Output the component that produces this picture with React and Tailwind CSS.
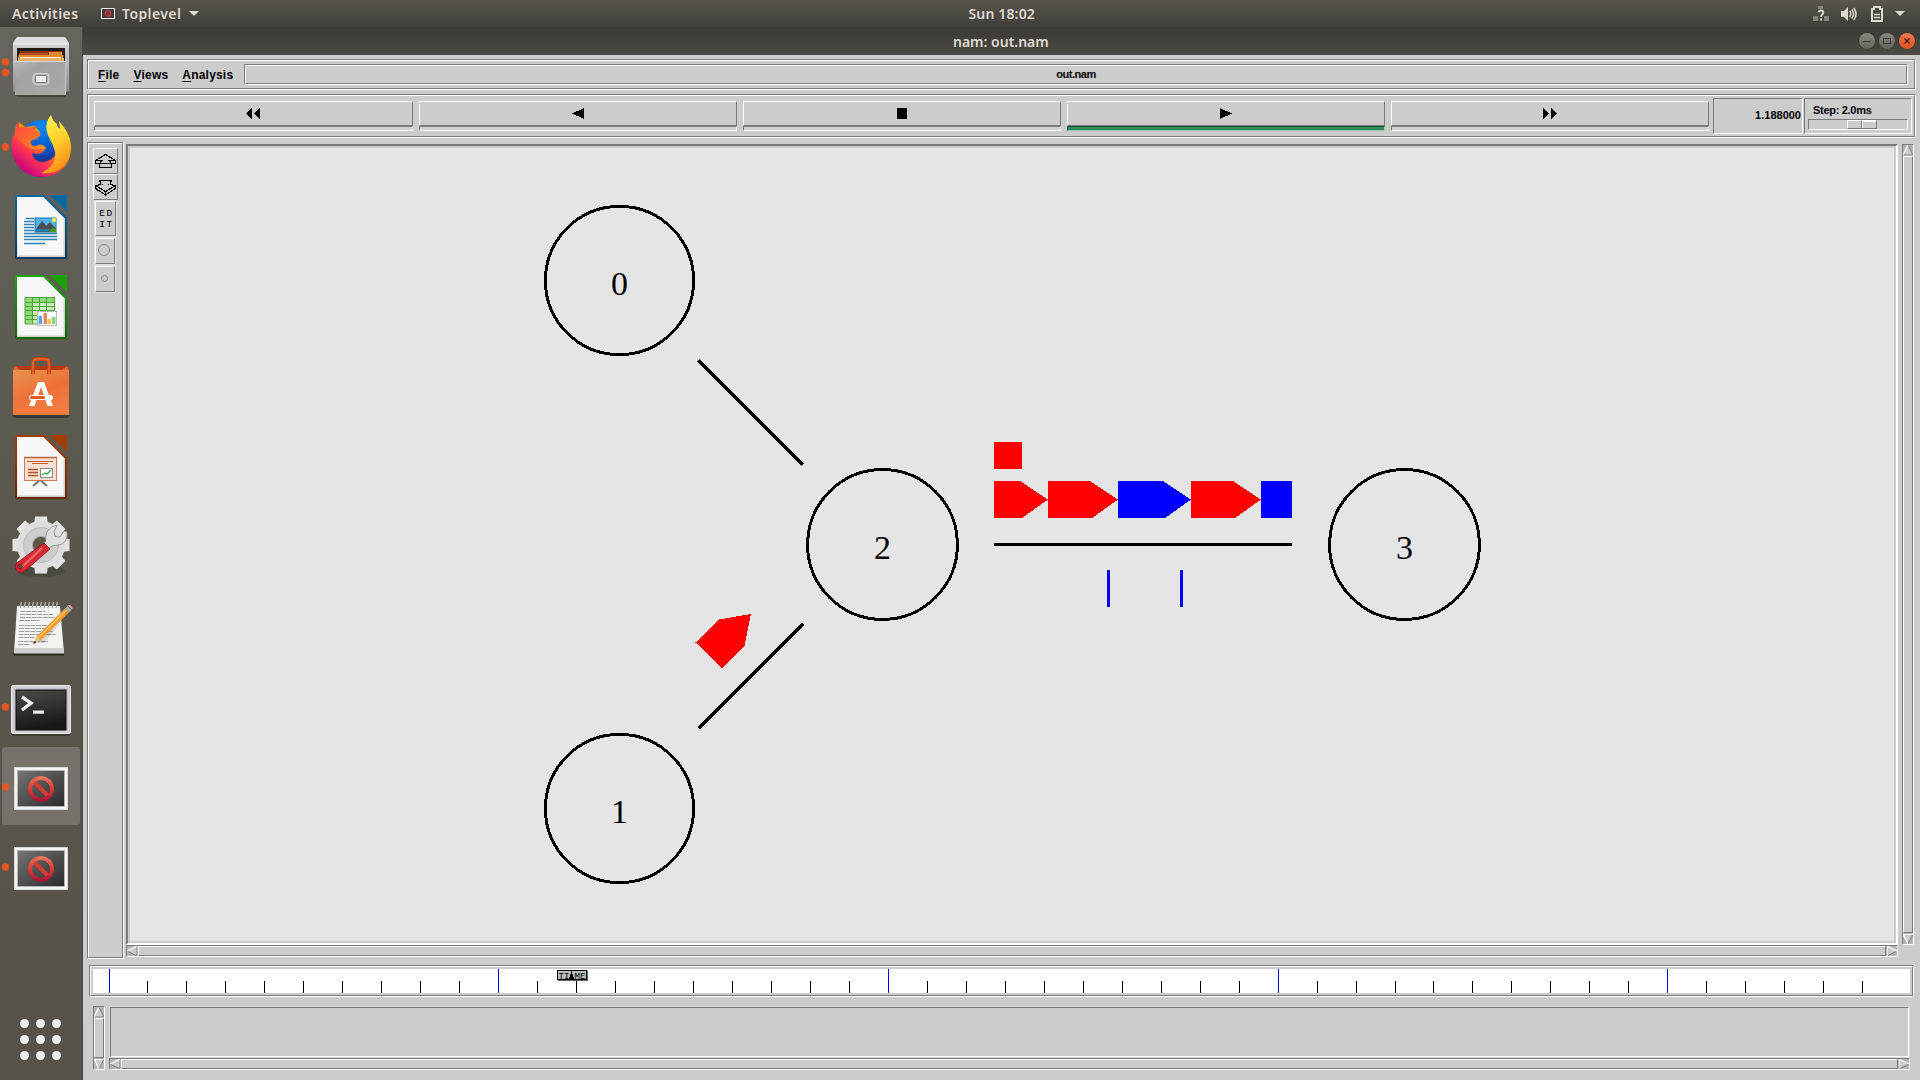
import React from "react";

const SUNKEN = "border border-t-[#7a7a7a] border-l-[#7a7a7a] border-b-white border-r-white";
const RAISED = "border border-t-white border-l-white border-b-[#7a7a7a] border-r-[#7a7a7a]";

function Groove({ className = "", inner = "", children }) {
  return (
    <div className={`${SUNKEN} ${className}`}>
      <div className={`${RAISED} h-full w-full ${inner}`}>{children}</div>
    </div>
  );
}

/* ---------- Dock icons ---------- */

function FilesIcon() {
  return (
    <>
      <defs>
        <linearGradient id="cab" x1="0" y1="0" x2="0" y2="1">
          <stop offset="0" stopColor="#d2d2d2" />
          <stop offset="1" stopColor="#8c8c8c" />
        </linearGradient>
        <linearGradient id="drawer" x1="0" y1="0" x2="1" y2="1">
          <stop offset="0" stopColor="#b9b9b9" />
          <stop offset="0.3" stopColor="#a2a2a2" />
          <stop offset="1" stopColor="#a9a9a9" />
        </linearGradient>
      </defs>
      <path d="M14 65h54l-3 5H17z" fill="#000" opacity=".3" />
      <path d="M13 17h56v47l-3 1H15l-2-1z" fill="url(#cab)" />
      <path d="M17 10h48l4 6v1H13v-1z" fill="#dedede" />
      <path d="M13.5 17h55" stroke="#f4f4f4" />
      <rect x="17" y="21" width="48" height="13" fill="#1f1c1a" />
      <path d="M20 24h42v10H19z" fill="#8f3410" />
      <path d="M49 25h13v3H49zM18.500 28h45v6h-46z" fill="#e08a2e" />
      <path d="M19 26h29v2H19z" fill="#b4521b" />
      <path d="M18 31h46v3H18z" fill="#e9b26c" />
      <path d="M20 30.500h41" stroke="#fff3e0" />
      <path d="M15 34h51v34H15z" fill="url(#drawer)" />
      <path d="M26 34.500h39.500v33" stroke="#c9c9c9" fill="none" />
      <path d="M15 34.500h51" stroke="#dadada" />
      <rect x="33" y="46.500" width="16" height="11" rx="3" fill="#b5b5b5" stroke="#d8d8d8" />
      <rect x="35.500" y="48.500" width="11" height="7" rx="1" fill="#ededed" stroke="#777" />
    </>
  );
}

function FirefoxIcon() {
  return (
    <>
      <defs>
        <radialGradient id="fxGlobe" cx=".5" cy=".1" r=".95">
          <stop offset="0" stopColor="#0b8cf5" />
          <stop offset=".55" stopColor="#0655c4" />
          <stop offset="1" stopColor="#36156b" />
        </radialGradient>
        <linearGradient id="fxBody" x1=".85" y1=".1" x2=".2" y2=".9">
          <stop offset="0" stopColor="#ffe226" />
          <stop offset=".35" stopColor="#ff980e" />
          <stop offset=".68" stopColor="#ff3750" />
          <stop offset="1" stopColor="#c60084" />
        </linearGradient>
        <linearGradient id="fxTail" x1=".2" y1="0" x2=".6" y2="1">
          <stop offset="0" stopColor="#fff44f" />
          <stop offset=".5" stopColor="#ffd02a" />
          <stop offset="1" stopColor="#ff8a16" />
        </linearGradient>
        <linearGradient id="fxHead" x1="0" y1="0" x2="1" y2="1">
          <stop offset="0" stopColor="#ff3b47" />
          <stop offset="1" stopColor="#ff9a12" />
        </linearGradient>
      </defs>
      <circle cx="42" cy="37" r="24" fill="url(#fxGlobe)" />
      <path d="M19 15c-3 3-4 6-4 10-3 5-4 10-3.500 16C13 58 25 70 42 70c17 0 28-12 29-28 .500-10-4-19-12-28 2 12 2 24-3 33-4 6-9 8-15 8-6-1-8-5-9-9 5 2 10 2 14-5-6 0-9-3-14-2-3-6-1-9 3-10l5-4-6-6-9 1z" fill="url(#fxBody)" />
      <path d="M19 15c-3 4-4 10-1 16 4 6 9 9 14 11 5 1 9 0 14-1-2-4-7-4-10-2-4 1-6-2-5-5l7-3 3-4-6-4 2-4-9 2c-4-1-7-1-9 0z" fill="url(#fxHead)" />
      <path d="M51 8c-5 6-6 13-3 20 3 8 8 13 7 22-1 8-7 13-14 16 15 2 27-6 29-20 1-12-4-20-11-25-2-1-2-3-2-4-3-2-5-5-6-9z" fill="url(#fxTail)" />
    </>
  );
}

function Page({ color, dark, children, id }) {
  return (
    <>
      <defs>
        <linearGradient id={id} x1="0" y1="0" x2="0" y2="1">
          <stop offset="0" stopColor={color} />
          <stop offset="1" stopColor={dark} />
        </linearGradient>
      </defs>
      <path d="M16 8h28.500L67 30.500V71l-1 1H16l-1-1V9z" fill={`url(#${id})`} />
      <path d="M17 10h26.500L65 31.500V70H17z" fill="#cfcfcf" />
      <path d="M17 10h26L63.500 31v37.500H17.500z" fill="#f7f7f7" />
      <path d="M49.500 8H67v17z" fill={color} />
      {children}
    </>
  );
}

function WriterIcon() {
  return (
    <Page color="#0869a3" dark="#063c60" id="pgW">
      <path d="M26 31.500h8M24 34.500h10M24 37.500h10M24 40.500h10M24 43.500h10M24 46.500h33M24 49.500h33M24 52.500h33M24 56.500h21" stroke="#2f80b5" strokeWidth="1.500" />
      <rect x="35" y="31" width="21" height="14" fill="#4fb3ea" stroke="#1b74ad" />
      <circle cx="54" cy="33" r="2.200" fill="#fce94f" />
      <path d="M36 42l6-8 4 5 4-4 6 7v3H36z" fill="#4b4f52" />
      <path d="M36 42h15l-3 2.500H36z" fill="#1c7fae" />
      <path d="M50 43l3-2 3 1v3h-7z" fill="#4e9a06" />
    </Page>
  );
}

function CalcIcon() {
  return (
    <Page color="#18a303" dark="#0d6a02" id="pgC">
      <rect x="25" y="30.500" width="29" height="26" fill="#c4ecb4" />
      <path d="M25 30.500h29.500v5H25zM25 30.500h7v26h-7z" fill="#8fd777" />
      <path d="M25 30.500h29.500V57H25zM25 35.500h29M25 39.500h29M25 43.500h29M25 48.500h29M25 52.500h29M32.500 30v27M39.500 30v27M46.500 30v27" stroke="#4fa53c" fill="none" />
      <rect x="37.500" y="44.500" width="19" height="14" fill="#fff" stroke="#bababa" />
      <path d="M38.500 49h3.500v8h-3.500z" fill="#5aa2e0" />
      <path d="M43.500 46h3.500v11h-3.500z" fill="#e08a5e" />
      <path d="M47.500 52h3.500v5h-3.500z" fill="#edc33b" />
      <path d="M52 50h3.500v7H52z" fill="#86d48a" />
    </Page>
  );
}

function ImpressIcon() {
  return (
    <Page color="#a33e03" dark="#6b2802" id="pgI">
      <path d="M40 53l-7 6M40 53l7 6" stroke="#777" strokeWidth="2" />
      <rect x="24.500" y="30.500" width="32" height="23" fill="#f8dfd1" stroke="#cf7c54" />
      <path d="M24 30.500h33" stroke="#b9633a" strokeWidth="1.500" />
      <path d="M27 34.500h26M32 36.500h16" stroke="#c4602f" strokeWidth="1.200" />
      <path d="M28 42.500h10M28 45.500h10M28 48.500h10" stroke="#a9562f" strokeWidth="1.300" />
      <rect x="40.500" y="41.500" width="12" height="9" fill="#fff" stroke="#888" />
      <path d="M42 48l3-2 2 1 4-4" stroke="#4bb05e" strokeWidth="1.500" fill="none" />
    </Page>
  );
}

function SoftwareIcon() {
  return (
    <>
      <defs>
        <linearGradient id="bag" x1="0" y1="0" x2=".5" y2="1">
          <stop offset="0" stopColor="#e79350" />
          <stop offset=".6" stopColor="#ee7038" />
          <stop offset="1" stopColor="#f07c3e" />
        </linearGradient>
      </defs>
      <path d="M11 68h60l-4 3H15z" fill="#000" opacity=".35" />
      <path d="M15 19h52v5H15z" fill="#b43b0d" />
      <path d="M13 23l2-4 5 4zM69 23l-2-4-5 4z" fill="#e4622c" />
      <path d="M13 23h56v45H13z" fill="url(#bag)" />
      <path d="M13 53h56v15H13z" fill="#f47b40" opacity=".5" />
      <path d="M33 27V16q0-4 4-4h8q4 0 4 4v11" fill="none" stroke="#c9430f" strokeWidth="4" />
      <path d="M33 27V16q0-4 4-4h8q4 0 4 4v11" fill="none" stroke="#ea6830" strokeWidth="1.500" />
      <path d="M29 59l9-24h6l9 24h-5.500L41 40l-6.500 19z" fill="#fff" />
      <rect x="29" y="48" width="24" height="5" rx="2.500" fill="#fff" />
      <rect x="30" y="49" width="15" height="3" rx="1.500" fill="#e35a20" />
    </>
  );
}

function SettingsIcon() {
  const teeth = [0, 45, 90, 135, 180, 225, 270, 315];
  return (
    <>
      <ellipse cx="41" cy="64" rx="24" ry="6" fill="#000" opacity=".15" />
      {teeth.map((a) => (
        <path key={a} d="M34 18l1-8.500h12l1 8.500z" fill="#e3e3e3" transform={`rotate(${a} 41 38)`} />
      ))}
      <circle cx="41" cy="38" r="17.500" fill="none" stroke="#dedede" strokeWidth="13" />
      <circle cx="41" cy="38" r="13" fill="none" stroke="#cdcdcd" strokeWidth="9" />
      <circle cx="41" cy="38" r="17.500" fill="none" stroke="#b4b4b4" strokeWidth=".8" />
      <circle cx="41" cy="38" r="8.500" fill="#5b5749" stroke="#a8a8a8" />
      <path d="M46 34c-1-6 1-12 8-15l3-.5-3 6 1 5 5 .5 4-6 3 1c1 7-3 13-9 13l-6 1-4 3-5-5z" fill="#dedfdc" stroke="#8b8d88" strokeWidth=".8" />
      <path d="M44 36l6 6-24 21c-3 3-7 3-9 1-3-3-2-7 1-9z" fill="#d62b35" stroke="#8e1119" strokeWidth=".8" />
      <path d="M42 41L22 60" stroke="#f06a6d" strokeWidth="2" />
      <circle cx="20" cy="59.500" r="2.300" fill="#6a5246" stroke="#7a0c12" strokeWidth=".8" />
    </>
  );
}

function NotesIcon() {
  return (
    <>
      <path d="M13 66h51v2.500H13z" fill="#2c2924" />
      <path d="M17 19h43l4 47H14z" fill="#f3f3f1" />
      <path d="M14.300 61h49.300l.4 5.500H14z" fill="#d0d0ce" />
      <path d="M20.500 24.500h25M20 27.500h33M20 30.500h35M19.500 33.500h20M19 38.500h31M19 41.500h27M19 44.500h34M18.500 47.500h37M18.500 50.500h16M18 54.500h30M18 57.500h12" stroke="#9b9b9b" strokeDasharray="5 .7" />
      {[20, 24, 28, 32, 36, 40, 44, 48, 52, 56].map((x) => (
        <path key={x} d={`M${x} 21l1.500-6`} stroke="#aaa" strokeWidth="1.500" />
      ))}
      <path d="M36 56l26-22-18 22z" fill="#000" opacity=".12" />
      <path d="M33 57l3.500-7.500 4.500 4z" fill="#e3c18b" />
      <path d="M33 57l1.500-3 2 1.500z" fill="#222" />
      <path d="M36.500 49.500L65 21.500l4 4-28.500 28z" fill="#f39a27" />
      <path d="M37.500 51.500L67 22.500" stroke="#ffc56d" strokeWidth="1.500" />
      <path d="M65 21.500l2.500-2.500 4 4-2.500 2.500z" fill="#a8adb3" />
      <path d="M67.500 18.500c2-2 6.500 1.500 4.500 4z" fill="#e79a9c" />
    </>
  );
}

function TerminalIcon() {
  return (
    <>
      <defs>
        <linearGradient id="term" x1="0" y1="0" x2=".2" y2="1">
          <stop offset="0" stopColor="#4a4a4a" />
          <stop offset="1" stopColor="#181818" />
        </linearGradient>
      </defs>
      <rect x="12" y="65" width="58" height="4" rx="1" fill="#000" opacity=".3" />
      <rect x="11.500" y="18.500" width="59" height="48" rx="1.500" fill="#c4c4ca" stroke="#e9e9e9" />
      <rect x="13" y="20" width="56" height="45" fill="none" stroke="#dcdce0" />
      <rect x="16" y="23" width="50" height="40" fill="url(#term)" stroke="#111" />
      <path d="M22 30l9 6-9 7" fill="none" stroke="#eee" strokeWidth="3.400" />
      <rect x="33" y="43.500" width="11" height="3.200" fill="#eee" />
    </>
  );
}

function ToplevelIcon() {
  return (
    <>
      <defs>
        <linearGradient id="tlBg" x1="0" y1="0" x2="1" y2="1">
          <stop offset="0" stopColor="#757575" />
          <stop offset="1" stopColor="#2a2a2a" />
        </linearGradient>
        <linearGradient id="tlNo" x1="0" y1="0" x2="0" y2="1">
          <stop offset="0" stopColor="#ee7a5d" />
          <stop offset=".5" stopColor="#d93a35" />
          <stop offset="1" stopColor="#a90d3b" />
        </linearGradient>
      </defs>
      <rect x="14.500" y="20.500" width="53" height="42" fill="#f5f5f5" stroke="#d8d8d8" />
      <rect x="17.500" y="23.500" width="47" height="36" fill="url(#tlBg)" stroke="#b5b5b5" />
      <path d="M41 29a13 13 0 1 0 .01 0zM41 33a9 9 0 1 1-.01 0z" fill="url(#tlNo)" fillRule="evenodd" />
      <path d="M34.500 35.500l13 13" stroke="#d63a37" strokeWidth="4" />
    </>
  );
}

const DOCK = [
  { Icon: FilesIcon, dots: [35, 45.5] },
  { Icon: FirefoxIcon, dots: [40] },
  { Icon: WriterIcon, dots: [] },
  { Icon: CalcIcon, dots: [] },
  { Icon: SoftwareIcon, dots: [] },
  { Icon: ImpressIcon, dots: [] },
  { Icon: SettingsIcon, dots: [] },
  { Icon: NotesIcon, dots: [] },
  { Icon: TerminalIcon, dots: [40] },
  { Icon: ToplevelIcon, dots: [40], active: true },
  { Icon: ToplevelIcon, dots: [40] },
];

function Dock() {
  return (
    <aside className="flex w-[83px] shrink-0 flex-col border-r border-[#4a4741] bg-linear-to-b from-[#65645d] via-[#5a564b] to-[#57534c]">
      {DOCK.map(({ Icon, dots, active }, i) => (
        <div key={i} className="h-20 w-full py-px pl-[2px]">
          <div className={`h-[78px] w-[78px] rounded-[3px] ${active ? "bg-[#76726b]" : ""}`}>
            <svg className="-ml-[2px] -mt-px block h-20 w-[83px] overflow-visible" viewBox="0 0 83 80">
              <Icon />
              {dots.map((y) => (
                <circle key={y} cx="5.500" cy={y} r="3.700" fill="#e95420" />
              ))}
            </svg>
          </div>
        </div>
      ))}
      <div className="mt-auto mr-px mb-5 grid grid-cols-3 gap-[7px] self-center">
        {Array.from({ length: 9 }, (_, i) => (
          <span key={i} className="h-[9px] w-[9px] rounded-full bg-[#eeeeec]" />
        ))}
      </div>
    </aside>
  );
}

/* ---------- Desktop top bar ---------- */

function TopBar() {
  return (
    <header className="grid h-[27px] grid-cols-[1fr_auto_1fr] items-center bg-linear-to-b from-[#5a564e] to-[#403e39] font-['Noto_Sans',sans-serif] text-[14px] font-semibold text-[#dfdbd2]">
      <div className="flex items-center">
        <span className="ml-3 w-[68px] whitespace-nowrap tracking-[0.4px]">Activities</span>
        <svg className="ml-[21px] h-[11px] w-[14px]" viewBox="0 0 14 11">
          <rect x=".5" y=".5" width="13" height="10" fill="#3c3c3c" stroke="#eee" />
          <circle cx="7" cy="5.500" r="2.700" fill="none" stroke="#d8323b" strokeWidth="1.300" />
          <path d="M5.500 4l3 3" stroke="#d8323b" />
        </svg>
        <span className="ml-[7px] w-[62px] whitespace-nowrap tracking-[0.4px]">Toplevel</span>
        <svg className="ml-[5px] h-[5px] w-[10px]" viewBox="0 0 10 5">
          <path d="M0 0h10L5 5z" fill="#dfdbd2" />
        </svg>
      </div>
      <span className="ml-[85px] w-[68px] whitespace-nowrap tracking-[0.15px]">Sun 18:02</span>
      <div className="flex items-center justify-end pr-[15px]">
        <svg className="h-4 w-4" viewBox="0 0 16 16">
          <path d="M5 0h5v3H5zM0 10h5v5H0zM11 10h5v5h-5z" fill="#85827b" />
          <path d="M5.500 6.200C6 3.800 10.500 3.800 10.300 6.600 10.200 8.300 8 8.500 8 11" fill="none" stroke="#dfdbd2" strokeWidth="1.900" />
          <path d="M7 12.500h2v2H7z" fill="#dfdbd2" />
        </svg>
        <svg className="ml-3 h-4 w-4" viewBox="0 0 16 16">
          <path d="M0 5h3l4-4v14l-4-4H0z" fill="#dfdbd2" />
          <path d="M8.700 5q2 3 0 6M10.800 3.500q3.500 4.500 0 9M12.800 2q4.500 6 0 12" fill="none" stroke="#dfdbd2" strokeWidth="1.500" />
        </svg>
        <svg className="ml-[14px] h-4 w-3" viewBox="0 0 12 16">
          <path d="M1 3h2V1h6v2h2v12H1z" fill="none" stroke="#dfdbd2" strokeWidth="2" />
          <path d="M3 8.500h6M3 11.500h6" stroke="#dfdbd2" strokeWidth="1.600" />
        </svg>
        <svg className="ml-3 h-[5px] w-[10px]" viewBox="0 0 10 5">
          <path d="M0 0h10L5 5z" fill="#dfdbd2" />
        </svg>
      </div>
    </header>
  );
}

function TitleBar() {
  const base = "flex h-4 w-4 items-center justify-center rounded-full shadow-[0_0_0_0.5px_#302e2a]";
  return (
    <div className="grid h-7 grid-cols-[1fr_auto_1fr] items-center bg-linear-to-b from-[#3b3934] to-[#4c4a44] font-['Noto_Sans',sans-serif] text-[14px] font-semibold text-[#dfdbd2]">
      <span />
      <span className="w-[97px] whitespace-nowrap">nam: out.nam</span>
      <div className="flex justify-end gap-1 pr-[5px]">
        <span className={`${base} bg-linear-to-b from-[#8b887f] to-[#66635c]`}>
          <span className="h-px w-2 bg-[#3b3a36]" />
        </span>
        <span className={`${base} bg-linear-to-b from-[#8b887f] to-[#66635c]`}>
          <span className="h-[6px] w-2 border border-[#3b3a36]" />
        </span>
        <span className={`${base} bg-linear-to-b from-[#f4764a] to-[#dd4f1d]`}>
          <svg className="h-[6px] w-[6px]" viewBox="0 0 6 6">
            <path d="M.5.5l5 5M5.500.5l-5 5" stroke="#3a1d10" strokeWidth="1.200" />
          </svg>
        </span>
      </div>
    </div>
  );
}

/* ---------- nam window ---------- */

function MenuRow() {
  return (
    <Groove className="h-[31px]" inner="flex pt-[3px] pl-[9px] pr-[6px]">
      <nav className="flex w-[146px] gap-[14px] pt-1 text-[12px] leading-[14px] font-bold tracking-[0.2px]">
        <span><u className="underline-offset-2">F</u>ile</span>
        <span><u className="underline-offset-2">V</u>iews</span>
        <span><u className="underline-offset-2">A</u>nalysis</span>
      </nav>
      <Groove className="h-[21px] flex-1" inner="flex items-center justify-center">
        <span className="text-[11px] leading-none font-bold tracking-[-0.45px]">out.nam</span>
      </Groove>
    </Groove>
  );
}

const PLAYBACK = [
  { d: "M6 0v11L0 5.500zM14 0v11L8 5.500z", w: 14, nudge: "mr-[2px]" },
  { d: "M12 0v11L0 5.500z", w: 12 },
  { d: "M0 0h10v11H0z", w: 10 },
  { d: "M0 0v11L12 5.500z", w: 12, on: true },
  { d: "M0 0v11L6 5.500zM8 0v11L14 5.500z", w: 14 },
];

function Toolbar() {
  return (
    <Groove className="mt-1 h-11" inner="flex pl-[5px]">
      <div className="mt-[5px] grid h-[30px] grid-cols-[319px_318px_318px_318px_318px] gap-x-[6px]">
        {PLAYBACK.map(({ d, w, on, nudge = "" }, i) => (
          <div key={i}>
            <div className={`${RAISED} flex h-[25px] items-center justify-center`}>
              <svg className={nudge} width={w} height="11" viewBox={`0 0 ${w} 11`} shapeRendering="crispEdges">
                <path d={d} />
              </svg>
            </div>
            <div
              className={
                on
                  ? "h-[5px] border border-t-[#1b5334] border-l-[#1b5334] border-b-[#96c5ab] border-r-[#96c5ab] bg-[#2e8b57]"
                  : `${SUNKEN} h-[5px] bg-[#d2d2d2]`
              }
            />
          </div>
        ))}
      </div>
      <div className={`${SUNKEN} mt-[2px] ml-1 flex h-9 w-[90px] items-center justify-end pr-[1px] pb-[2px]`}>
        <span className="text-[11px] leading-none font-bold">1.188000</span>
      </div>
      <div className={`${SUNKEN} mt-[2px] ml-[1px] h-9 w-[108px] px-[3px] pt-[5px]`}>
        <div className="pl-[5px] text-[11px] leading-[12px] font-bold tracking-[-0.3px]">Step: 2.0ms</div>
        <div className={`${SUNKEN} mt-[3px] h-[11px] pl-[38px]`}>
          <div className={`${RAISED} flex h-[9px] w-[30px]`}>
            <span className="w-[14px] border-r border-[#7a7a7a]" />
            <span className="w-[14px] border-t border-l border-white" />
          </div>
        </div>
      </div>
    </Groove>
  );
}

const ARROWS = {
  up: ["M5 0L0 10h10z", "M5 0L0 10", "M5 0l5 10H0"],
  down: ["M0 0h10L5 10z", "M10 0H0l5 10", "M10 0L5 10"],
  left: ["M10 0v10L0 5z", "M10 0L0 5", "M0 5l10 5V0"],
  right: ["M0 0v10l10-5z", "M0 10V0l10 5", "M10 5L0 10"],
};

function Arrow({ dir }) {
  const [body, light, dark] = ARROWS[dir];
  return (
    <svg className="h-[10px] w-[10px] shrink-0" viewBox="0 0 10 10">
      <path d={body} fill="#cccccc" />
      <path d={dark} fill="none" stroke="#7a7a7a" />
      <path d={light} fill="none" stroke="#fff" strokeWidth="1.300" />
    </svg>
  );
}

function Scrollbar({ vertical, className = "" }) {
  return (
    <div className={`${SUNKEN} flex gap-px bg-[#b3b3b3] ${vertical ? "w-3 flex-col" : "h-3"} ${className}`}>
      <Arrow dir={vertical ? "up" : "left"} />
      <div className={`${RAISED} flex-1 bg-[#cccccc]`} />
      <Arrow dir={vertical ? "down" : "right"} />
    </div>
  );
}

const TOOL = "flex items-center justify-center border border-t-white border-l-white border-b-[#7a7a7a] border-r-[#7a7a7a]";

function Palette() {
  return (
    <Groove className="h-[817px] w-[37px]" inner="flex flex-col pl-1 pt-1">
      <div className={`${TOOL} h-[26px] w-[25px]`}>
        <svg className="h-[15px] w-[21px]" viewBox="0 0 21 15" shapeRendering="crispEdges">
          <path d="M10.500.5L.5 6.500v3h4v4h12v-4h4v-3zM.5 6.500h6.500l-2.500 3M20.500 6.500h-6.500l2.500 3M4.500 9.500h12" fill="none" stroke="#000" strokeWidth="1.200" />
        </svg>
      </div>
      <div className={`${TOOL} h-[26px] w-[25px]`}>
        <svg className="mt-px h-[16px] w-[21px]" viewBox="0 0 21 16" shapeRendering="crispEdges">
          <path d="M4.500.5h12l-1.500 3.500 2 1 3.500.5v3l-10 6.500-10-6.500v-3l3.500-.5 2-1zM.5 5.500l10 6 10-6M10.500 11v4M7 4.500h1M13 4.500h1" fill="none" stroke="#000" strokeWidth="1.200" />
        </svg>
      </div>
      <div className={`${TOOL} ml-[2px] mt-[1px] h-[35px] w-[21px] flex-col gap-[3px] pt-[2px] font-['Liberation_Mono',monospace] text-[9.5px] leading-[8px] outline outline-[#e0e0e0]`}>
        <span className="pl-[2px] tracking-[1.5px]">ED</span>
        <span className="pl-[2px] tracking-[1.5px]">IT</span>
      </div>
      <div className={`${TOOL} ml-[2px] mt-[2px] h-[26px] w-5 outline outline-[#e0e0e0]`}>
        <span className="mr-[2px] mb-[2px] h-3 w-3 rounded-full border border-[#8a8a8a]" />
      </div>
      <div className={`${TOOL} ml-[2px] mt-[2px] h-[26px] w-5 outline outline-[#e0e0e0]`}>
        <span className="mr-px mb-px h-[7px] w-[7px] rounded-full border border-[#8a8a8a]" />
      </div>
    </Groove>
  );
}

const NODES = [
  { id: "0", x: 619.5, y: 280.5 },
  { id: "1", x: 619.5, y: 808.5 },
  { id: "2", x: 882.5, y: 544.5 },
  { id: "3", x: 1404.5, y: 544.5 },
];

const PACKETS = [
  { d: "M994 481h26l28 18.500L1022 518h-28z", fill: "#ff0000" },
  { d: "M1048 481h42l28 18.500L1092 518h-44z", fill: "#ff0000" },
  { d: "M1118 481h45l28 18.500L1165 518h-47z", fill: "#0000ff" },
  { d: "M1191 481h42l28 18.500L1235 518h-44z", fill: "#ff0000" },
  { d: "M1261 481h31v37h-31z", fill: "#0000ff" },
  { d: "M994 442h28v27h-28z", fill: "#ff0000" },
  { d: "M695.500 642.500l23.500-23 32-5.500-6.500 32-22.500 22z", fill: "#ff0000" },
  { d: "M1107 570h3v37h-3zM1180 570h3v37h-3z", fill: "#0000ff" },
];

function Network() {
  return (
    <div className="h-[801px] w-[1772px] border-2 border-t-[#7a7a7a] border-l-[#7a7a7a] border-b-white border-r-white">
      <div className="h-full w-full border-2 border-[#cccccc] bg-[#e5e5e5]">
        <svg className="block h-[793px] w-[1764px]" viewBox="130 148 1764 793" shapeRendering="crispEdges">
          <path d="M698.500 360.500L803 465M698.500 728.500L803 624" stroke="#000" strokeWidth="3.600" />
          <path d="M994 544.500h298" stroke="#000" strokeWidth="3" />
          {PACKETS.map(({ d, fill }, i) => (
            <path key={i} d={d} fill={fill} />
          ))}
          {NODES.map(({ id, x, y }) => (
            <g key={id}>
              <circle cx={x} cy={y} r={id < "2" ? 74.1 : 74.9} fill="none" stroke="#000" strokeWidth="3" />
              <text x={x} y={y + 14.5} textAnchor="middle" fontFamily="Liberation Serif, serif" fontSize="34">
                {id}
              </text>
            </g>
          ))}
        </svg>
      </div>
    </div>
  );
}

function Timeline() {
  const ticks = Array.from({ length: 46 }, (_, i) => ({
    x: Math.floor(109 + 38.97 * i),
    major: i % 10 === 0,
  }));
  return (
    <Groove className="ml-[2px] mt-[6px] h-8 w-[1825px]" inner="p-[2px]">
      <svg className="block h-6 w-[1817px] bg-white" viewBox="93 969 1817 24" shapeRendering="crispEdges">
        {ticks.map(({ x, major }) => (
          <rect key={x} x={x} y={major ? 969 : 981} width="1" height={major ? 24 : 12} fill={major ? "#0000ee" : "#000"} />
        ))}
        <rect x="558" y="971" width="30" height="10" fill="#666" />
        <rect x="557.500" y="970.500" width="29" height="9" fill="#bdbdbd" stroke="#000" />
        <text x="558.500" y="978.500" fontFamily="Liberation Mono, monospace" fontSize="9">TI</text>
        <text x="574.500" y="978.500" fontFamily="Liberation Mono, monospace" fontSize="9">ME</text>
        <path d="M571 970h1v4h1v3h1v3h-5v-3h1v-3h1z" />
      </svg>
    </Groove>
  );
}

function NamWindow() {
  return (
    <main className="flex min-w-0 flex-1 flex-col bg-[#cccccc] font-['Liberation_Sans',sans-serif] text-black">
      <TitleBar />
      <div className="flex flex-col pl-1 pr-1 pt-1">
        <MenuRow />
        <Toolbar />
        <div className="mt-1 flex">
          <Palette />
          <div className="ml-[2px] mt-[2px] flex flex-col">
            <Network />
            <Scrollbar />
          </div>
          <Scrollbar vertical className="ml-1 mt-[2px] h-[801px]" />
        </div>
        <Timeline />
        <div className="ml-[6px] mt-[9px] flex gap-1">
          <Scrollbar vertical className="h-16" />
          <div className="w-[1801px]">
            <div className="border border-[#dadada]">
              <div className={`${SUNKEN} h-[50px]`} />
            </div>
            <Scrollbar />
          </div>
        </div>
      </div>
    </main>
  );
}

export default function App() {
  return (
    <div className="flex h-[1080px] w-[1920px] flex-col overflow-hidden bg-[#cccccc]">
      <TopBar />
      <div className="flex min-h-0 flex-1">
        <Dock />
        <NamWindow />
      </div>
    </div>
  );
}
